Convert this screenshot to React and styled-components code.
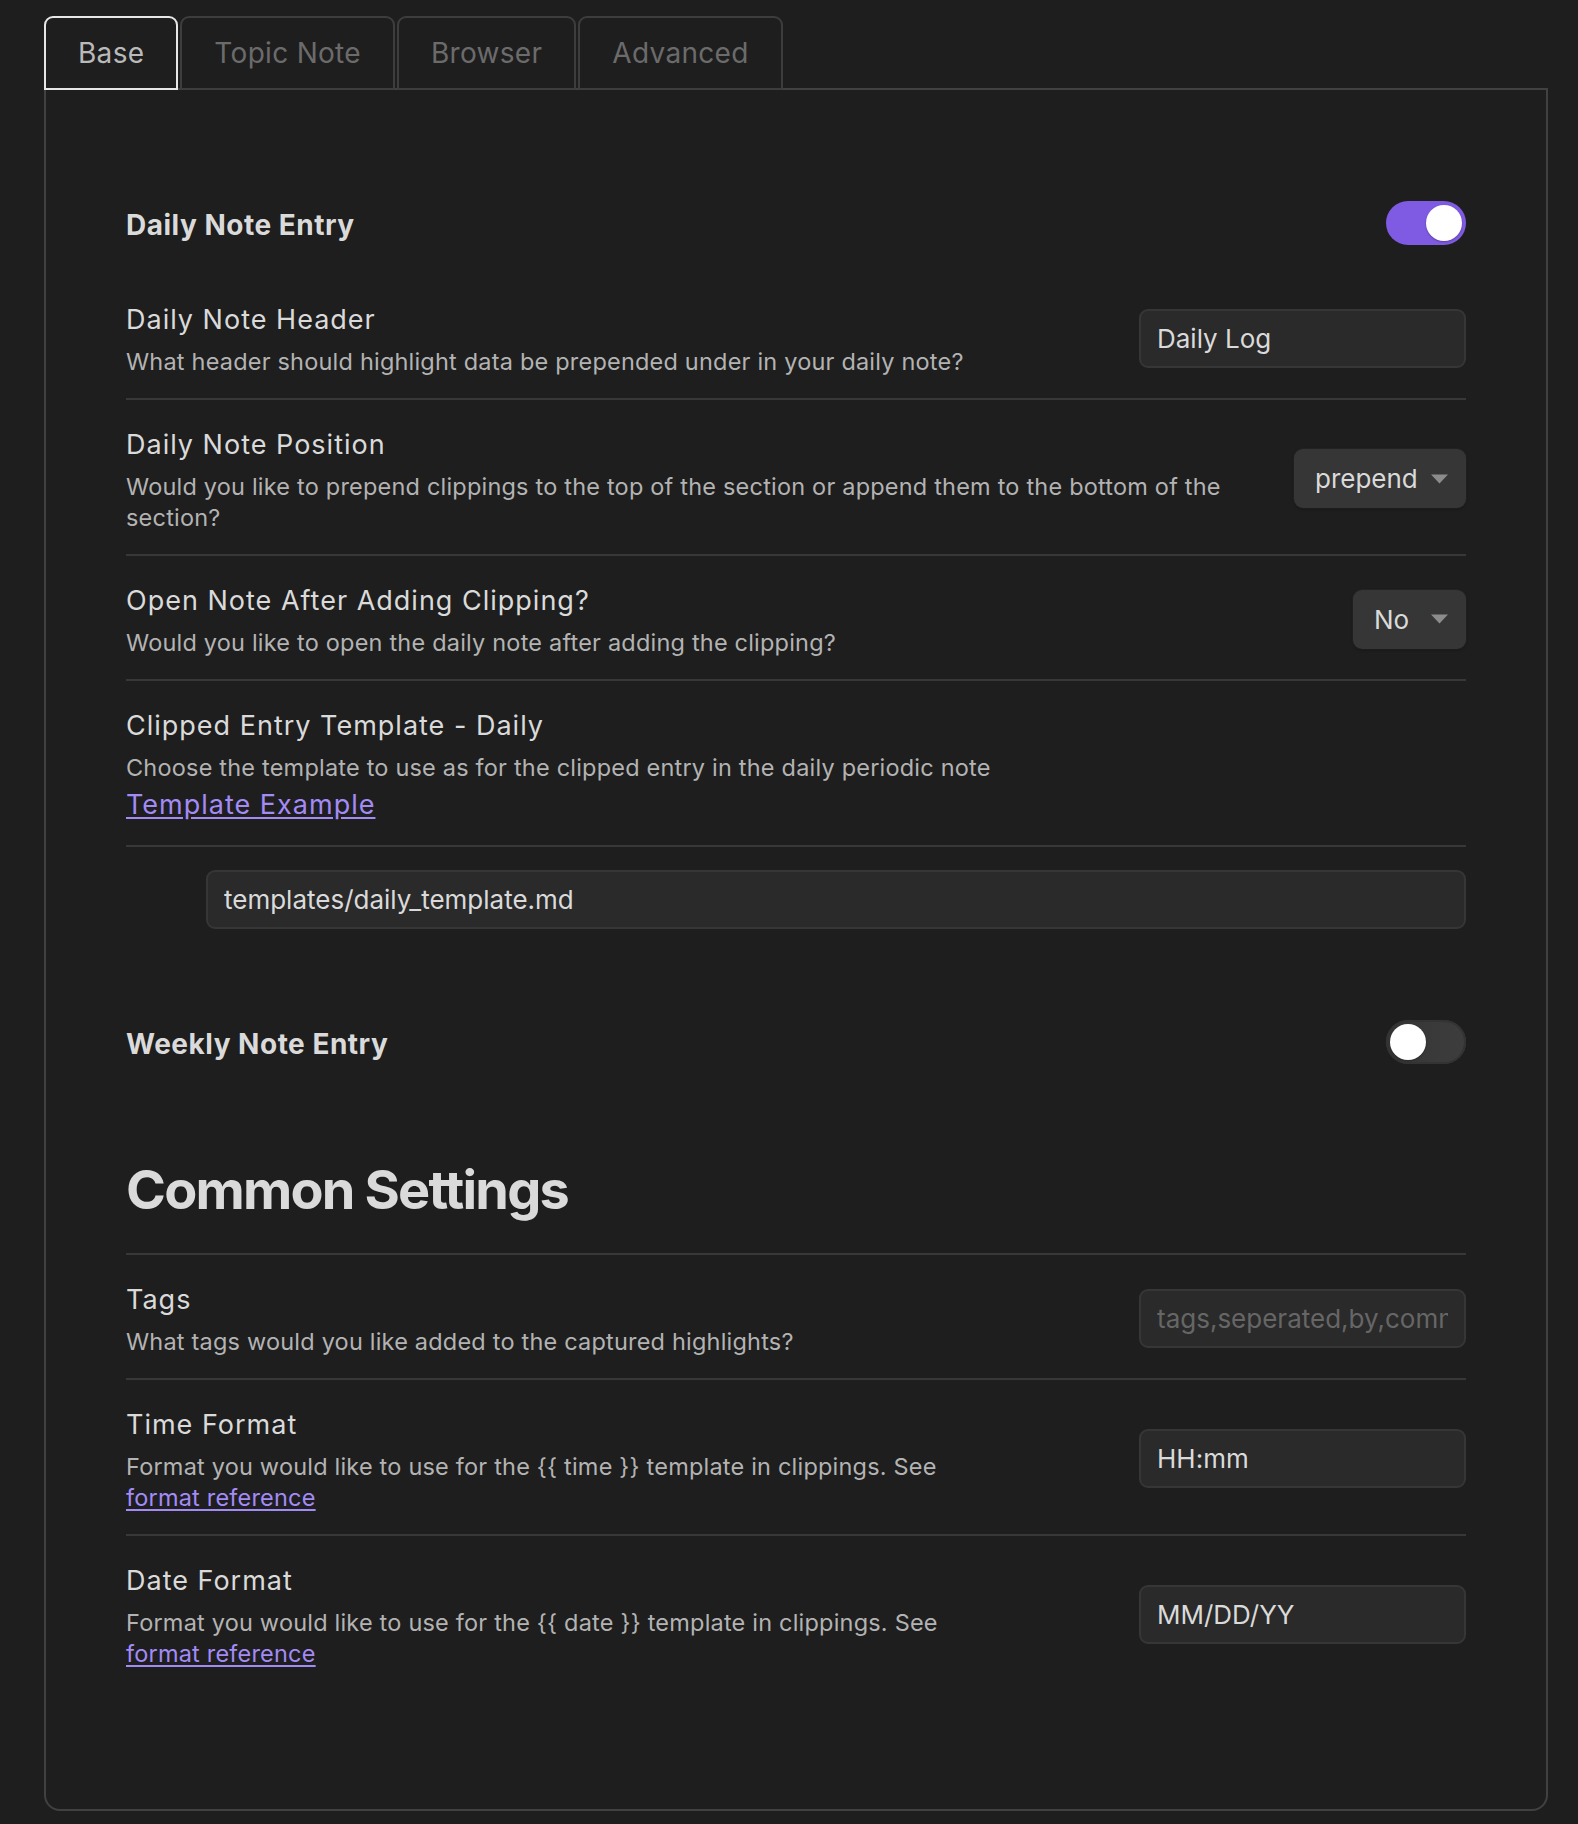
import React from "react";
import styled, { createGlobalStyle } from "styled-components";

const GlobalStyle = createGlobalStyle`
  html, body {
    margin: 0;
    padding: 0;
    background: #1e1e1e;
  }
  body {
    font-family: Inter, "Noto Sans", "Liberation Sans", sans-serif;
    color: #dadada;
    -webkit-font-smoothing: antialiased;
  }
  * { box-sizing: border-box; }
`;

const Page = styled.div`
  background: #1e1e1e;
  padding: 16px 30px 11px 44px;
`;

const TabBar = styled.div`
  display: flex;
  gap: 2px;
  align-items: flex-end;
`;

const Tab = styled.div`
  position: relative;
  z-index: ${(p) => (p.$active ? 2 : 1)};
  height: 74px;
  margin-bottom: -2px;
  padding: 0 32px;
  display: flex;
  align-items: center;
  border: 2px solid ${(p) => (p.$active ? "#e6e6e6" : "#3d3d3d")};
  border-radius: 9px 9px 0 0;
  background: #1e1e1e;
  font-size: 28px;
  color: ${(p) => (p.$active ? "#bababa" : "#6b6b6b")};
  letter-spacing: 0.3px;
`;

const Panel = styled.div`
  border: 2px solid #414141;
  border-radius: 0 0 16px 16px;
  padding: 111px 80px 119px;
`;

const HeadingRow = styled.div`
  display: flex;
  align-items: center;
  justify-content: space-between;
  height: 44px;
  margin-top: ${(p) => p.$top || 0}px;
  margin-bottom: 28px;
`;

const HeadingName = styled.div`
  font-size: 28px;
  font-weight: 700;
  color: #dadada;
  letter-spacing: 0.5px;
  padding-top: 3px;
`;

const ToggleTrack = styled.div`
  position: relative;
  width: 80px;
  height: 44px;
  border-radius: 22px;
  background: ${(p) =>
    p.$on ? "#7f5be3" : "linear-gradient(90deg, #353535 0%, #3d3d3d 100%)"};
  box-shadow: ${(p) => (p.$on ? "none" : "inset 0 0 0 2px #333333")};
  flex-shrink: 0;
`;

const ToggleKnob = styled.div`
  position: absolute;
  top: 4px;
  left: ${(p) => (p.$on ? "40px" : "4px")};
  width: 36px;
  height: 36px;
  border-radius: 50%;
  background: #ffffff;
  box-shadow: 0 1px 2px rgba(0, 0, 0, 0.3);
`;

const Toggle = ({ on }) => (
  <ToggleTrack $on={on}>
    <ToggleKnob $on={on} />
  </ToggleTrack>
);

const Row = styled.div`
  display: flex;
  align-items: center;
  gap: 28px;
  border-top: 2px solid ${(p) => (p.$first ? "transparent" : "#383838")};
  padding: ${(p) => p.$pad || "24px 0 21px"};
`;

const Info = styled.div`
  flex: 1 1 auto;
  min-width: 0;
  padding-top: 3px;
`;

const Name = styled.div`
  font-size: 27px;
  line-height: 36px;
  color: #dadada;
  letter-spacing: 1px;
`;

const Desc = styled.div`
  margin-top: 8px;
  font-size: 23.5px;
  line-height: 31px;
  color: #b3b3b3;
  letter-spacing: 0.2px;
`;

const Link = styled.a`
  color: #a38bf6;
  text-decoration: underline;
  text-underline-offset: 3px;
  cursor: pointer;
  display: ${(p) => (p.$big ? "block" : "inline")};
  font-size: ${(p) => (p.$big ? "27px" : "inherit")};
  line-height: ${(p) => (p.$big ? "38px" : "inherit")};
  letter-spacing: ${(p) => (p.$big ? "1px" : "inherit")};
  margin-top: ${(p) => (p.$big ? "3px" : "0")};
  width: fit-content;
`;

const TextInput = styled.input`
  flex: ${(p) => (p.$wide ? "1 1 auto" : "0 0 327px")};
  width: ${(p) => (p.$wide ? "auto" : "327px")};
  height: 59px;
  margin-left: ${(p) => (p.$wide ? "80px" : "0")};
  padding: 0 16px;
  background: #2a2a2a;
  border: 2px solid #363636;
  border-radius: 9px;
  font-family: Inter, "Noto Sans", "Liberation Sans", sans-serif;
  font-size: 26px;
  color: #dadada;
  outline: none;
  &::placeholder {
    color: #666666;
  }
`;

const Select = styled.div`
  flex: 0 0 auto;
  display: flex;
  align-items: center;
  justify-content: space-between;
  height: 59px;
  padding: 0 18px 0 21px;
  background: #363636;
  border-radius: 9px;
  box-shadow: 0 1px 3px rgba(0, 0, 0, 0.35), 0 0 0 1px rgba(255, 255, 255, 0.03);
  font-size: 26px;
  color: #dadada;
  width: ${(p) => p.$w}px;
  & > svg {
    flex-shrink: 0;
  }
`;

const Arrow = () => (
  <svg width="17" height="10" viewBox="0 0 17 10">
    <polygon points="0,0.5 17,0.5 8.5,9.5" fill="#8c8c8c" />
  </svg>
);

const SectionTitle = styled.h2`
  margin: 94px 0 31px;
  font-size: 54px;
  line-height: 64px;
  font-weight: 700;
  color: #dadada;
  letter-spacing: -1.8px;
`;

const tabs = ["Base", "Topic Note", "Browser", "Advanced"];

export default function App() {
  return (
    <>
      <GlobalStyle />
      <Page>
        <TabBar>
          {tabs.map((t, i) => (
            <Tab key={t} $active={i === 0}>
              {t}
            </Tab>
          ))}
        </TabBar>
        <Panel>
          <HeadingRow>
            <HeadingName>Daily Note Entry</HeadingName>
            <Toggle on />
          </HeadingRow>

          <Row $first>
            <Info>
              <Name>Daily Note Header</Name>
              <Desc>What header should highlight data be prepended under in your daily note?</Desc>
            </Info>
            <TextInput defaultValue="Daily Log" />
          </Row>

          <Row>
            <Info>
              <Name>Daily Note Position</Name>
              <Desc>
                Would you like to prepend clippings to the top of the section or append them to the bottom of the
                section?
              </Desc>
            </Info>
            <Select $w={172}>
              <span>prepend</span>
              <Arrow />
            </Select>
          </Row>

          <Row>
            <Info>
              <Name>Open Note After Adding Clipping?</Name>
              <Desc>Would you like to open the daily note after adding the clipping?</Desc>
            </Info>
            <Select $w={113}>
              <span>No</span>
              <Arrow />
            </Select>
          </Row>

          <Row>
            <Info>
              <Name>Clipped Entry Template - Daily</Name>
              <Desc>
                Choose the template to use as for the clipped entry in the daily periodic note
                <Link $big>Template Example</Link>
              </Desc>
            </Info>
          </Row>

          <Row $pad="23px 0 24px">
            <TextInput $wide defaultValue="templates/daily_template.md" />
          </Row>

          <HeadingRow $top={67}>
            <HeadingName>Weekly Note Entry</HeadingName>
            <Toggle />
          </HeadingRow>

          <SectionTitle>Common Settings</SectionTitle>

          <Row>
            <Info>
              <Name>Tags</Name>
              <Desc>What tags would you like added to the captured highlights?</Desc>
            </Info>
            <TextInput placeholder="tags,seperated,by,commas" />
          </Row>

          <Row>
            <Info>
              <Name>Time Format</Name>
              <Desc>
                Format you would like to use for the {"{{ time }}"} template in clippings. See
                <br />
                <Link>format reference</Link>
              </Desc>
            </Info>
            <TextInput defaultValue="HH:mm" />
          </Row>

          <Row>
            <Info>
              <Name>Date Format</Name>
              <Desc>
                Format you would like to use for the {"{{ date }}"} template in clippings. See
                <br />
                <Link>format reference</Link>
              </Desc>
            </Info>
            <TextInput defaultValue="MM/DD/YY" />
          </Row>
        </Panel>
      </Page>
    </>
  );
}
